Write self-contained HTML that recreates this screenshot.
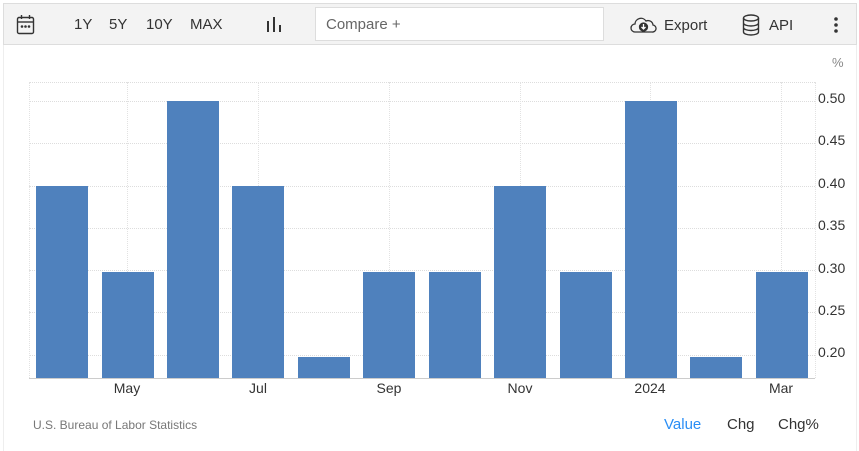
<!DOCTYPE html>
<html><head><style>
body{margin:0;width:859px;height:451px;background:#fff;font-family:"Liberation Sans",sans-serif;position:relative;overflow:hidden}
.a{position:absolute}
.tb{left:3px;top:3px;width:852px;height:40px;background:#f3f3f3;border:1px solid #ddd}
.t{font-size:15px;color:#333}
.bar{position:absolute;background:#4f81bd;width:52px;bottom:73px}
.hl{position:absolute;left:29px;width:786px;border-top:1px dotted #ddd;height:0}
.vl{position:absolute;top:82px;height:296px;border-left:1px dotted #e2e2e2;width:0}
.yl{position:absolute;left:818px;font-size:14px;color:#333}
.xl{position:absolute;top:380px;font-size:14px;color:#333;transform:translateX(-50%)}
</style></head><body>
<div class="a" style="left:3px;top:43px;width:852px;height:408px;border-left:1px solid #eee;border-right:1px solid #eee"></div>
<div class="a tb"></div>
<svg class="a" style="left:16px;top:14px" width="20" height="22" viewBox="0 0 20 22" fill="none" stroke="#333" stroke-width="1.4"><rect x="1.5" y="3.5" width="16" height="16" rx="1.5"/><line x1="1.5" y1="8" x2="17.5" y2="8"/><line x1="5.5" y1="1" x2="5.5" y2="5"/><line x1="13.5" y1="1" x2="13.5" y2="5"/><circle cx="6" cy="12.5" r=".6" fill="#333"/><circle cx="9.5" cy="12.5" r=".6" fill="#333"/><circle cx="13" cy="12.5" r=".6" fill="#333"/></svg>
<div class="a t" style="left:74px;top:16px">1Y</div>
<div class="a t" style="left:109px;top:16px">5Y</div>
<div class="a t" style="left:146px;top:16px">10Y</div>
<div class="a t" style="left:190px;top:16px">MAX</div>
<svg class="a" style="left:266px;top:16px" width="16" height="17"><rect x="1" y="5" width="2" height="11" fill="#333"/><rect x="7" y="1" width="2" height="15" fill="#333"/><rect x="13" y="9" width="2" height="7" fill="#333"/></svg>
<div class="a" style="left:315px;top:7px;width:287px;height:32px;background:#fff;border:1px solid #ddd"></div>
<div class="a" style="left:326px;top:16px;font-size:15px;color:#666">Compare +</div>
<svg class="a" style="left:630px;top:15px" width="28" height="20" viewBox="0 0 28 20" fill="none" stroke="#333" stroke-width="1.3"><path d="M7 17H5a4 4 0 0 1 0-8 6 6 0 0 1 11-3 5 5 0 0 1 7 4 3.5 3.5 0 0 1-1 7z"/><circle cx="13.5" cy="12" r="4" fill="#333"/><path d="M13.5 9v5M11.5 12l2 2 2-2" stroke="#fff"/></svg>
<div class="a t" style="left:664px;top:17px">Export</div>
<svg class="a" style="left:742px;top:14px" width="18" height="22" viewBox="0 0 18 22" fill="none" stroke="#333" stroke-width="1.4"><ellipse cx="9" cy="4" rx="7.5" ry="3"/><path d="M1.5 4v14c0 1.7 3.4 3 7.5 3s7.5-1.3 7.5-3V4M1.5 9c0 1.7 3.4 3 7.5 3s7.5-1.3 7.5-3M1.5 13.5c0 1.7 3.4 3 7.5 3s7.5-1.3 7.5-3"/></svg>
<div class="a t" style="left:769px;top:17px">API</div>
<svg class="a" style="left:833px;top:17px" width="6" height="16"><circle cx="3" cy="2" r="1.8" fill="#333"/><circle cx="3" cy="8" r="1.8" fill="#333"/><circle cx="3" cy="14" r="1.8" fill="#333"/></svg>
<div class="a" style="left:832px;top:55px;font-size:13px;color:#888">%</div>
<div class="hl" style="top:82px"></div><div class="hl" style="top:101px"></div><div class="hl" style="top:143px"></div><div class="hl" style="top:186px"></div><div class="hl" style="top:228px"></div><div class="hl" style="top:270px"></div><div class="hl" style="top:312px"></div><div class="hl" style="top:355px"></div>
<div class="vl" style="left:29px"></div><div class="vl" style="left:127px"></div><div class="vl" style="left:258px"></div><div class="vl" style="left:389px"></div><div class="vl" style="left:520px"></div><div class="vl" style="left:650px"></div><div class="vl" style="left:781px"></div><div class="vl" style="left:815px"></div>
<div class="a" style="left:29px;top:378px;width:786px;border-top:1px solid #ccc"></div>
<div class="bar" style="left:36px;top:186px"></div>
<div class="bar" style="left:102px;top:272px"></div>
<div class="bar" style="left:167px;top:101px"></div>
<div class="bar" style="left:232px;top:186px"></div>
<div class="bar" style="left:298px;top:357px"></div>
<div class="bar" style="left:363px;top:272px"></div>
<div class="bar" style="left:429px;top:272px"></div>
<div class="bar" style="left:494px;top:186px"></div>
<div class="bar" style="left:560px;top:272px"></div>
<div class="bar" style="left:625px;top:101px"></div>
<div class="bar" style="left:690px;top:357px"></div>
<div class="bar" style="left:756px;top:272px"></div>
<div class="yl" style="top:90px">0.50</div><div class="yl" style="top:132px">0.45</div><div class="yl" style="top:175px">0.40</div><div class="yl" style="top:217px">0.35</div><div class="yl" style="top:260px">0.30</div><div class="yl" style="top:302px">0.25</div><div class="yl" style="top:344px">0.20</div>
<div class="xl" style="left:127px">May</div><div class="xl" style="left:258px">Jul</div><div class="xl" style="left:389px">Sep</div><div class="xl" style="left:520px">Nov</div><div class="xl" style="left:650px">2024</div><div class="xl" style="left:781px">Mar</div>
<div class="a" style="left:33px;top:418px;font-size:12px;color:#777">U.S. Bureau of Labor Statistics</div>
<div class="a" style="left:664px;top:416px;font-size:15px;color:#2a8ef5">Value</div>
<div class="a" style="left:727px;top:416px;font-size:15px;color:#333">Chg</div>
<div class="a" style="left:778px;top:416px;font-size:15px;color:#333">Chg%</div>
</body></html>
